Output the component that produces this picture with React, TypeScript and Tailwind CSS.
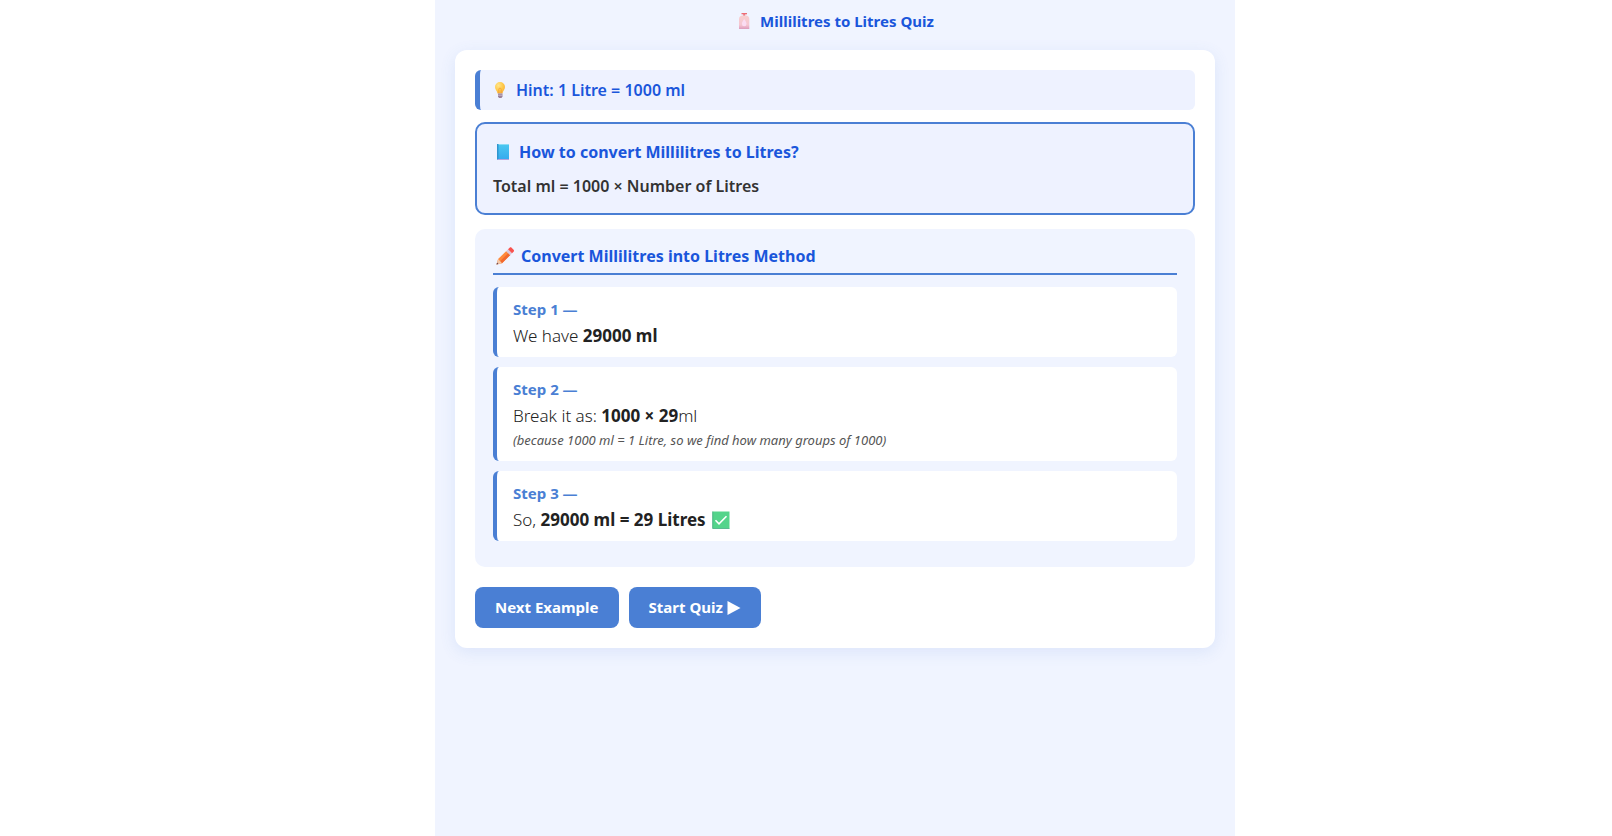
import { ReactNode } from "react";

const BottleIcon = () => (
  <svg viewBox="0 0 16 20" className="w-4 h-5 shrink-0" aria-hidden="true">
    <defs>
      <linearGradient id="bottle" x1="0" y1="0" x2="0" y2="1">
        <stop offset="0" stopColor="#f8cfcf" />
        <stop offset="0.7" stopColor="#f5c6d2" />
        <stop offset="1" stopColor="#dd9bbd" />
      </linearGradient>
    </defs>
    <path d="M5.500 2h5.500v1.300H5.500z" fill="#ee6b72" />
    <path d="M7.200 3.300h2v1.500h-2z" fill="#e85560" />
    <path d="M3 8c0-2 1.500-3.400 3.500-3.500h3.400c2 .1 3.400 1.500 3.400 3.500v10H3z" fill="url(#bottle)" />
    <path d="M8.200 8c1.200 1.900 2.300 3.300 2.300 4.800a2.300 2.500 0 0 1-4.600 0c0-1.500 1.100-2.900 2.300-4.800z" fill="#fbdcf2" />
  </svg>
);

const BulbIcon = () => (
  <svg viewBox="0 0 16 20" className="w-4 h-5 shrink-0" aria-hidden="true">
    <defs>
      <radialGradient id="bulb" cx="0.35" cy="0.3" r="0.75">
        <stop offset="0" stopColor="#ffe58a" />
        <stop offset="0.6" stopColor="#ffc94a" />
        <stop offset="1" stopColor="#f8b03c" />
      </radialGradient>
    </defs>
    <path d="M8 2a5 5 0 0 1 5 5c0 2.700-2.200 3.800-2.500 6.500h-5C5.200 10.800 3 9.700 3 7a5 5 0 0 1 5-5z" fill="url(#bulb)" />
    <path d="M6.800 13V9.300a1.200 1.200 0 1 1 2.400 0V13" fill="none" stroke="#f39b2f" strokeWidth="0.7" />
    <path d="M6 13.500h4.500v3l-1 1.500h-2.500l-1-1.500z" fill="#9a8199" />
    <path d="M6 15.200h4.500" stroke="#d5c7d8" strokeWidth="0.8" />
  </svg>
);

const BookIcon = () => (
  <svg viewBox="0 0 20 20" className="w-5 h-5 shrink-0" aria-hidden="true">
    <defs>
      <linearGradient id="book" x1="0" y1="0" x2="0" y2="1">
        <stop offset="0" stopColor="#4bc8f0" />
        <stop offset="1" stopColor="#35a9ee" />
      </linearGradient>
    </defs>
    <path d="M4 2h12v16H4z" fill="url(#book)" />
    <path d="M4 2h12v1H4z" fill="#8bdcf5" />
    <path d="M4 2h1.500v15H4z" fill="#2f95cf" />
    <path d="M5 17h11v1H4z" fill="#b5a2dc" />
  </svg>
);

const PencilIcon = () => (
  <svg viewBox="0 0 24 20" className="w-6 h-5 shrink-0" aria-hidden="true">
    <path d="M3.500 18.500l1.600-5.400L13.300 5l4 4-8.300 8.200z" fill="#ff8a3c" />
    <path d="M15.300 7l2 2-8.300 8.200-1.900-1.900z" fill="#f2692f" />
    <path d="M3.500 18.500l1.600-5.400 3.900 4.100z" fill="#f3c7a8" />
    <path d="M3.500 18.500l.6-2 1.400 1.500z" fill="#5d3b4a" />
    <path d="M13.100 5.200l1.900-1.900 4 4-1.900 1.900z" fill="#d9c9de" />
    <path d="M15 3.300l1.600-1.600c.6-.6 1.400-.6 2 0l2 2c.6.6.6 1.400 0 2L19 7.300z" fill="#f8524e" />
  </svg>
);

const CheckIcon = () => (
  <svg viewBox="0 0 18 18" className="w-[18px] h-[18px] shrink-0" aria-hidden="true">
    <path d="M.5.500h17v17H.5z" fill="#54d48b" />
    <path d="M.7.500v17h16.800" fill="none" stroke="#3aa57a" strokeWidth="0.7" />
    <path d="M3.500 9.300l3.500 3.500 7.500-7.600" fill="none" stroke="#fff" strokeWidth="1.600" />
  </svg>
);

const PlayIcon = () => (
  <svg viewBox="0 0 14 14" className="w-3.5 h-3.5" fill="currentColor" aria-hidden="true">
    <path d="M.5 0L13.500 7 .5 14z" />
  </svg>
);

function Step({ number, children }: { number: number; children: ReactNode }) {
  return (
    <li className="rounded-md border-l-4 border-[#4a7fd4] bg-white px-4 py-2">
      <h3 className="text-[15px] leading-7 font-bold text-[#4a7fd4]">Step {number} —</h3>
      {children}
    </li>
  );
}

export default function App() {
  return (
    <div className="min-h-screen bg-white pl-[58px] font-['Noto_Sans','Open_Sans',sans-serif] text-[#222]">
      <main className="mx-auto min-h-screen max-w-[800px] bg-[#f0f4ff] px-5 pb-5">
        <h1 className="flex h-[50px] items-start justify-center pt-2 text-[15px] leading-[26px] font-bold text-[#1a56db]">
          <span className="flex items-center gap-2">
            <BottleIcon />
            Millilitres to Litres Quiz
          </span>
        </h1>

        <section className="rounded-xl bg-white p-5 shadow-[0_4px_16px_rgba(74,127,212,0.12)]">
          <p className="mb-3 flex items-center gap-2 rounded-md border-l-[5px] border-[#4a7fd4] bg-[#eef2ff] px-3 py-2 text-base leading-6 font-semibold text-[#1a56db]">
            <BulbIcon />
            Hint: 1 Litre = 1000 ml
          </p>

          <div className="mb-3.5 rounded-[10px] border-2 border-[#4a7fd4] bg-[#eef2ff] px-4 py-3.5">
            <h2 className="mb-2 flex items-center gap-1.5 text-base leading-7 font-bold text-[#1a56db]">
              <BookIcon />
              How to convert Millilitres to Litres?
            </h2>
            <p className="text-base leading-[25px] font-semibold text-[#333]">Total ml = 1000 × Number of Litres</p>
          </div>

          <div className="rounded-[10px] bg-[#f0f4ff] px-[18px] pt-3.5 pb-[26px]">
            <h2 className="mb-3 flex items-center gap-1 border-b-2 border-[#4a7fd4] pb-1 text-base leading-[26px] font-bold text-[#1a56db]">
              <PencilIcon />
              Convert Millilitres into Litres Method
            </h2>
            <ol className="flex flex-col gap-2.5">
              <Step number={1}>
                <p className="text-[17px] leading-[26px] font-light">
                  We have <b className="font-bold">29000 ml</b>
                </p>
              </Step>
              <Step number={2}>
                <p className="text-[17px] leading-[26px] font-light">
                  Break it as: <b className="font-bold">1000 × 29</b>ml
                </p>
                <p className="pb-0.5 text-[13px] leading-[22px] text-[#555] italic">
                  (because 1000 ml = 1 Litre, so we find how many groups of 1000)
                </p>
              </Step>
              <Step number={3}>
                <p className="flex items-center gap-1.5 text-[17px] leading-[26px] font-light">
                  <span>
                    So, <b className="font-bold">29000 ml = 29 Litres</b>
                  </span>
                  <CheckIcon />
                </p>
              </Step>
            </ol>
          </div>

          <div className="mt-5 flex flex-wrap gap-2.5">
            <button type="button" className="rounded-lg bg-[#4a7fd4] px-5 py-2 text-[15px] leading-[25px] font-bold text-white">
              Next Example
            </button>
            <button type="button" className="flex items-center gap-1 rounded-lg bg-[#4a7fd4] px-5 py-2 text-[15px] leading-[25px] font-bold text-white">
              Start Quiz
              <PlayIcon />
            </button>
          </div>
        </section>
      </main>
    </div>
  );
}
